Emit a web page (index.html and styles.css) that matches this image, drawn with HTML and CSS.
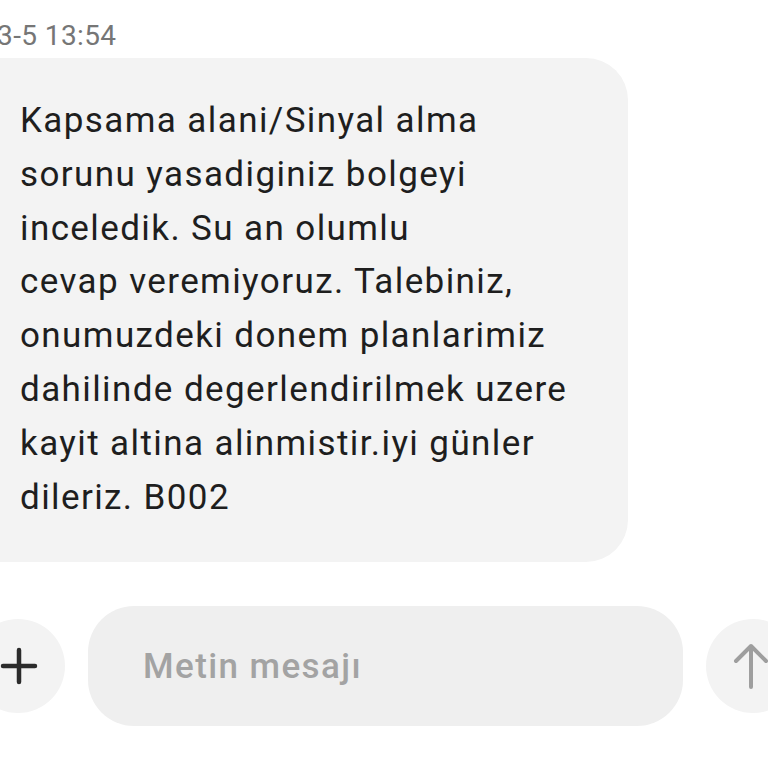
FILE: index.html
```html
<!DOCTYPE html>
<html lang="tr">
<head>
    <meta charset="UTF-8">
    <meta name="viewport" content="width=device-width, initial-scale=1.0">
    <title>Mesajlar</title>
    <link rel="stylesheet" href="styles.css">
</head>
<body>
    <div class="thread">
        <div class="timestamp">3-5 13:54</div>
        <div class="bubble">
            <p>Kapsama alani/Sinyal alma<br>
            sorunu yasadiginiz bolgeyi<br>
            inceledik. Su an olumlu<br>
            cevap veremiyoruz. Talebiniz,<br>
            onumuzdeki donem planlarimiz<br>
            dahilinde degerlendirilmek uzere<br>
            kayit altina alinmistir.iyi günler<br>
            dileriz. B002</p>
        </div>
    </div>
    <div class="composer">
        <button class="round-btn add-btn" aria-label="Ekle">
            <svg width="38" height="38" viewBox="0 0 38 38">
                <path d="M19 3v32M3 19h32" stroke="#2b2b2b" stroke-width="4.5" stroke-linecap="round" fill="none"/>
            </svg>
        </button>
        <div class="input-pill">Metin mesajı</div>
        <button class="round-btn send-btn" aria-label="Gönder">
            <svg width="36" height="48" viewBox="0 0 36 48">
                <path d="M18 45V4M3 19L18 4l15 15" stroke="#9e9e9e" stroke-width="4" stroke-linecap="round" stroke-linejoin="round" fill="none"/>
            </svg>
        </button>
    </div>
</body>
</html>
```
FILE: styles.css
```css
html, body {
    margin: 0;
    height: 100%;
    background: #ffffff;
    font-family: Roboto, "Noto Sans", sans-serif;
    overflow: hidden;
}
.thread {
    padding-top: 20px;
}
.timestamp {
    margin-left: -3px;
    font-size: 28px;
    letter-spacing: 0.4px;
    line-height: 32px;
    color: #767676;
}
.bubble {
    margin-top: 6px;
    margin-left: -40px;
    width: 668px;
    box-sizing: border-box;
    padding: 36px 20px 38px 60px;
    background: #f3f3f3;
    border-radius: 42px;
}
.bubble p {
    margin: 0;
    font-size: 35px;
    letter-spacing: 1.4px;
    line-height: 53.8px;
    color: #1e1e1e;
}
/* Bottom compose bar */
.composer {
    display: flex;
    align-items: center;
    gap: 23px;
    margin-top: 44px;
    margin-left: -29px;
}
.round-btn {
    flex: 0 0 94px;
    height: 94px;
    border: none;
    border-radius: 50%;
    background: #f3f3f3;
    padding: 0;
    display: flex;
    align-items: center;
    justify-content: center;
}
.add-btn {
    justify-content: flex-end;
    padding-right: 27px;
}
.send-btn {
    justify-content: flex-start;
    padding-left: 27px;
}
.input-pill {
    flex: 0 0 595px;
    height: 120px;
    box-sizing: border-box;
    padding-left: 55px;
    display: flex;
    align-items: center;
    background: #efefef;
    border-radius: 46px;
    font-size: 35px;
    letter-spacing: 1.4px;
    font-weight: 500;
    color: #a3a3a3;
}
```
